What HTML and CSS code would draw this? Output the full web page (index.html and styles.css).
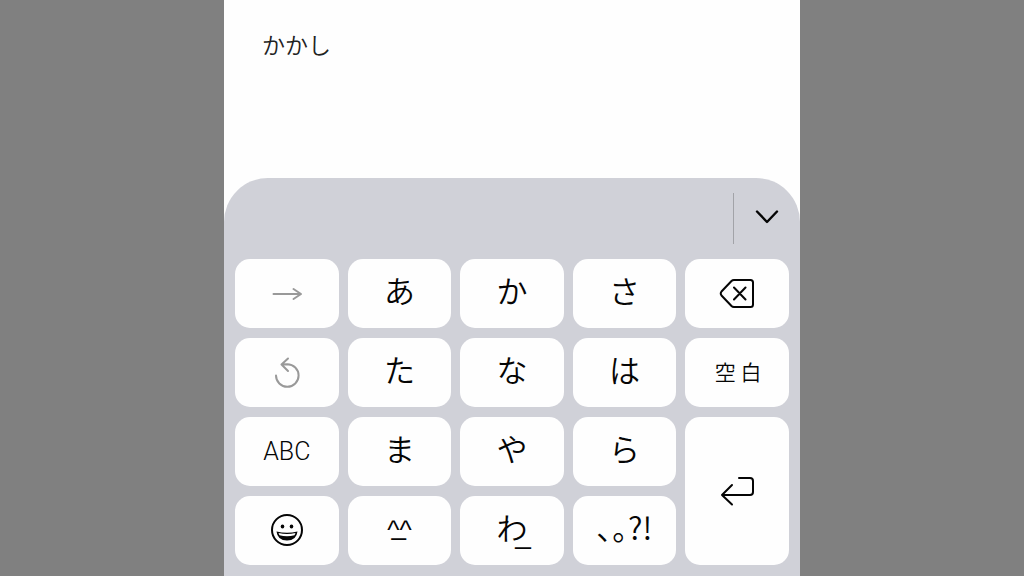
FILE: index.html
```html
<!DOCTYPE html>
<html lang="ja">
<head>
<meta charset="utf-8">
<meta name="viewport" content="width=device-width, initial-scale=1">
<title>かな入力</title>
<link rel="stylesheet" href="styles.css">
</head>
<body>
<main class="screen">
  <textarea class="note" aria-label="メモ" spellcheck="false">かかし</textarea>
  <section class="keyboard" aria-label="キーボード">
    <div class="candidates">
      <button class="expand" type="button" aria-label="候補を表示">
        <svg class="icon" width="24" height="16" viewBox="0 0 24 16"><path d="M2 2.500L12 13L22 2.500"/></svg>
      </button>
    </div>
    <div class="keys">
      <button class="key muted" type="button" aria-label="次の文字">
        <svg class="icon thin" width="32" height="16" viewBox="0 0 32 16"><path d="M2.500 9H29.500M22.500 4L30 9L22.500 14"/></svg>
      </button>
      <button class="key kana" type="button">あ</button>
      <button class="key kana" type="button">か</button>
      <button class="key kana" type="button">さ</button>
      <button class="key" type="button" aria-label="削除">
        <svg class="icon thin" width="36" height="30" viewBox="0 0 36 30"><path d="M15 2H31.500Q34 2 34 4.500V26.500Q34 29 31.500 29H15Q13.500 29 12.500 28L2.500 17.500Q1 15.500 2.500 13.500L12.500 3Q13.500 2 15 2ZM15 9.500L26.500 21.500M26.500 9.500L15 21.500"/></svg>
      </button>

      <button class="key muted" type="button" aria-label="逆順">
        <svg class="icon thin" width="28" height="32" viewBox="0 0 28 32"><path d="M3 19.500A11.300 11.300 0 1 0 14.300 8.200L8.500 8.500M15 2.500L8.500 8.500L15 15"/></svg>
      </button>
      <button class="key kana" type="button">た</button>
      <button class="key kana" type="button">な</button>
      <button class="key kana" type="button">は</button>
      <button class="key space" type="button">空 白</button>

      <button class="key latin" type="button">ABC</button>
      <button class="key kana" type="button">ま</button>
      <button class="key kana" type="button">や</button>
      <button class="key kana" type="button">ら</button>
      <button class="key enter" type="button" aria-label="改行">
        <svg class="icon thin" width="36" height="32" viewBox="0 0 36 32"><path d="M20 4H31Q34 4 34 7V18Q34 21 31 21H3M13 11L3 21L13 30.500"/></svg>
      </button>

      <button class="key" type="button" aria-label="絵文字">
        <svg class="icon thin" width="34" height="34" viewBox="0 0 34 34"><circle cx="17" cy="17" r="15"/><g class="solid"><ellipse cx="12.500" cy="13.500" rx="1.800" ry="2.100"/><ellipse cx="21.500" cy="13.500" rx="1.800" ry="2.100"/><path d="M6.500 18.500Q17 21 27.500 18.500Q26.500 27.500 17 27.500Q7.500 27.500 6.500 18.500Z"/></g><path class="teeth" d="M8.500 20Q17 22 25.500 20L24.500 22.300Q17 24.200 9.500 22.300Z"/></svg>
      </button>
      <button class="key face" type="button"><span>^^</span><span class="mouth">_</span></button>
      <button class="key kana" type="button">わ<span class="bar">_</span></button>
      <button class="key kana" type="button">､｡?!</button>
    </div>
  </section>
</main>
</body>
</html>
```

FILE: styles.css
```css
* {
  box-sizing: border-box;
}

body {
  margin: 0;
  background: #808080;
  color: #050505;
  font-family: "Noto Sans CJK JP", sans-serif;
  font-weight: 350;
}

.screen {
  display: flex;
  flex-direction: column;
  width: 56.25%;
  min-height: 100vh;
  margin: 0 auto;
  background: #fefefe;
}

.note {
  flex: 1;
  width: 100%;
  padding: 27px 38px;
  border: 0;
  outline: 0;
  resize: none;
  background: transparent;
  color: #222;
  font: inherit;
  font-size: 23px;
  line-height: 34px;
}

.keyboard {
  padding: 0 11px 11px;
  border-radius: 44px 44px 0 0;
  background: #d0d1d8;
}

.candidates {
  display: flex;
  justify-content: flex-end;
  padding: 15px 0;
}

.expand {
  display: flex;
  align-items: center;
  justify-content: center;
  width: 56px;
  height: 51px;
  padding: 0 0 4px 10px;
  border: 0;
  border-left: 1px solid #a2a3a8;
  background: none;
  color: #050505;
}

.keys {
  display: grid;
  grid-template-columns: repeat(5, 1fr);
  grid-auto-rows: 69px;
  gap: 10px 9px;
}

.key {
  display: flex;
  align-items: center;
  justify-content: center;
  position: relative;
  min-width: 0;
  padding: 0 0 2px;
  border: 0;
  border-radius: 15px;
  background: #fefefe;
  color: #050505;
  font: inherit;
  line-height: 40px;
}

.kana {
  padding: 0 0 8px;
  font-size: 31px;
}

.muted {
  color: #999;
}

.enter {
  grid-row: span 2;
}

.space {
  padding: 0 0 4px 2px;
  font-size: 21px;
}

.latin {
  padding: 0;
  font-family: Roboto, "Liberation Sans", sans-serif;
  font-size: 25px;
  font-weight: 300;
}

.face {
  font-family: "Liberation Sans", sans-serif;
  font-size: 26px;
}

.mouth,
.bar {
  position: absolute;
  font-family: "Liberation Sans", sans-serif;
}

.mouth {
  top: 10px;
  left: 44px;
}

.bar {
  top: 18px;
  left: 55px;
  font-size: 28px;
}

.icon {
  display: block;
  fill: none;
  stroke: currentColor;
  stroke-width: 2.4;
  stroke-linecap: round;
  stroke-linejoin: round;
}

.thin {
  stroke-width: 2;
}

.solid {
  fill: currentColor;
  stroke: none;
}

.teeth {
  fill: #fefefe;
  stroke: none;
}
```
